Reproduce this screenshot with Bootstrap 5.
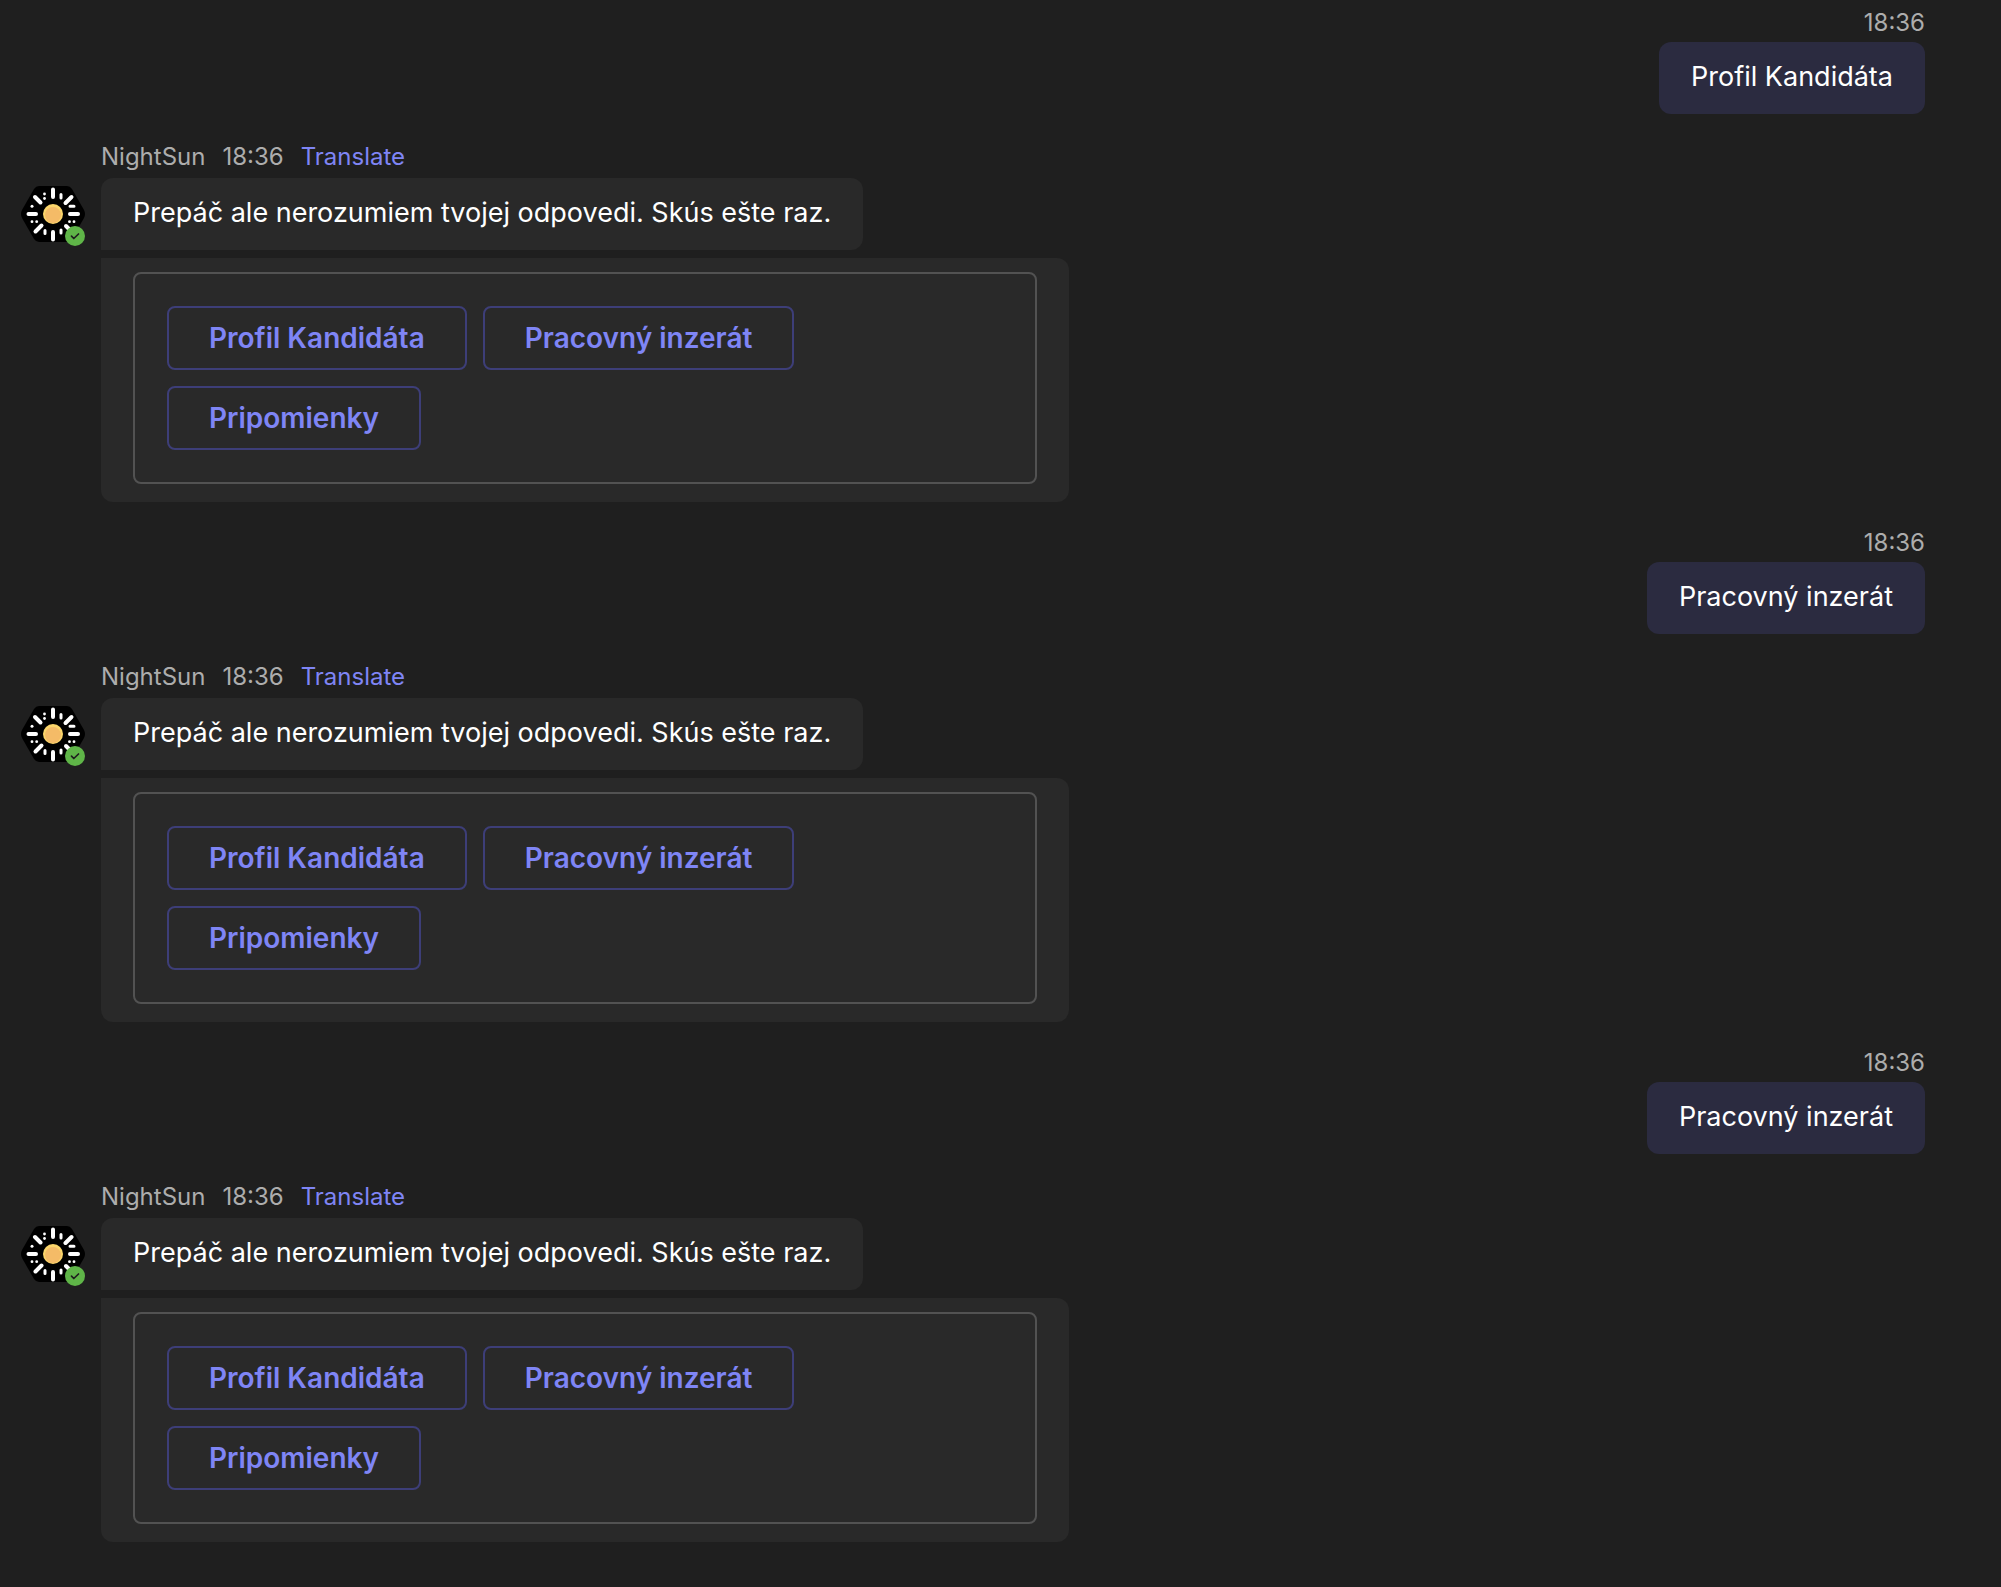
<!DOCTYPE html>
<html lang="sk">
<head>
<meta charset="utf-8">
<meta name="viewport" content="width=device-width, initial-scale=1">
<title>NightSun chat</title>
<link href="https://cdn.jsdelivr.net/npm/bootstrap@5.3.0/dist/css/bootstrap.min.css" rel="stylesheet">
<style>
  body { background: #1f1f1f; color: #fff; font-family: Inter, "Liberation Sans", sans-serif; font-size: 27px; line-height: 32px; }
  .chat-turn { padding-top: 7px; margin-bottom: 18px; }
  .sent-side { padding-right: 76px; }
  .chat-meta { font-size: 24px; line-height: 32px; color: #adadad; }
  .sent-side .chat-meta { margin-bottom: 3px; }
  .chat-meta a { color: #7f85f5; }
  .bubble { padding: 19px 32px 21px; border-radius: 12px; }
  .bubble-sent { background: #2b2b40; }
  .bubble-bot { background: #292929; border-bottom-left-radius: 0; }
  .bot-side { padding: 27px 20px 0 21px; }
  .bot-column { gap: 16px; }
  .bot-body { width: 968px; max-width: 100%; min-width: 0; }
  .bot-body .chat-meta { margin-bottom: 5px; }
  .bot-meta-gap { gap: 17px; }
  .avatar-box { width: 64px; height: 64px; margin-top: 41px; }
  .avatar-box svg { display: block; }
  .status-dot { position: absolute; right: 0; bottom: 0; }
  .choice-card { background: #292929; border-radius: 0 12px 12px 12px; margin-top: 8px; padding: 14px 32px 18px; }
  .choice-frame { border: 2px solid #525252; border-radius: 8px; padding: 32px; }
  .choice-list { gap: 16px; }
  .btn-choice { --bs-btn-color: #7f85f5; --bs-btn-border-color: #3d3e78; --bs-btn-hover-color: #9299f7; --bs-btn-hover-border-color: #5b5fc7; --bs-btn-border-width: 2px; --bs-btn-border-radius: 8px; --bs-btn-font-size: 28px; --bs-btn-font-weight: 600; --bs-btn-line-height: 32px; --bs-btn-padding-x: 40px; --bs-btn-padding-y: 14px; }
</style>
<script src="https://cdn.jsdelivr.net/npm/bootstrap@5.3.0/dist/js/bootstrap.bundle.min.js"></script>
</head>
<body>
<svg width="0" height="0" class="position-absolute" aria-hidden="true">
  <defs>
    <symbol id="sun-avatar" viewBox="0 0 64 64">
      <path d="M18 4h28q3 0 5 3l12 21q2 4 0 8L51 57q-2 3-5 3H18q-3 0-5-3L1 36q-2-4 0-8L13 7q2-3 5-3z" fill="#000"/>
      <g stroke="#fff" stroke-width="4" stroke-linecap="round">
        <path d="M32 7.500v7.500M32 50v7.500M7.500 32h7.500M49 32h8M14 15l5.500 5.500M50.500 15l-6 6M14.500 49.500l6-6M45 44l5 5"/>
      </g>
      <g stroke="#fff" stroke-width="3" stroke-linecap="round">
        <path d="M40 12.500v3.500M24 48.500v3M40 48v3M49 24.300h4"/>
      </g>
      <g fill="#fff">
        <circle cx="23.500" cy="12" r="1.400"/><circle cx="23.500" cy="16.500" r="1.400"/>
        <circle cx="11" cy="24.300" r="1.500"/>
        <circle cx="11" cy="39.700" r="1.400"/><circle cx="15.700" cy="39.700" r="1.400"/>
        <circle cx="48.500" cy="39.700" r="1.400"/><circle cx="53" cy="39.700" r="1.400"/>
      </g>
      <circle cx="32" cy="32" r="10" fill="#fbd66b"/>
      <circle cx="32" cy="33" r="8" fill="#f4bb67"/>
    </symbol>
    <symbol id="available" viewBox="0 0 20 20">
      <circle cx="10" cy="10" r="10" fill="#5fb548"/>
      <path d="M6.500 10.200l2.300 2.300 4.700-4.500" fill="none" stroke="#1f1f1f" stroke-width="1.700" stroke-linecap="round" stroke-linejoin="round"/>
    </symbol>
  </defs>
</svg>
<main>
  <section class="chat-turn">
    <div class="sent-side d-flex flex-column align-items-end">
      <time class="chat-meta">18:36</time>
      <div class="bubble bubble-sent">Profil Kandidáta</div>
    </div>
    <div class="bot-side"><div class="bot-column d-flex align-items-start">
      <div class="avatar-box position-relative flex-shrink-0">
        <svg width="64" height="64" role="img" aria-label="NightSun"><use href="#sun-avatar"/></svg>
        <svg class="status-dot" width="20" height="20" aria-hidden="true"><use href="#available"/></svg>
      </div>
      <div class="bot-body">
        <div class="chat-meta bot-meta-gap d-flex"><span>NightSun</span><time>18:36</time><a href="#" class="text-decoration-none">Translate</a></div>
        <div class="d-flex"><div class="bubble bubble-bot">Prepáč ale nerozumiem tvojej odpovedi. Skús ešte raz.</div></div>
        <div class="choice-card"><div class="choice-frame"><div class="choice-list d-flex flex-wrap">
          <button type="button" class="btn btn-choice">Profil Kandidáta</button>
          <button type="button" class="btn btn-choice">Pracovný inzerát</button>
          <button type="button" class="btn btn-choice">Pripomienky</button>
        </div></div></div>
      </div>
    </div></div>
  </section>
  <section class="chat-turn">
    <div class="sent-side d-flex flex-column align-items-end">
      <time class="chat-meta">18:36</time>
      <div class="bubble bubble-sent">Pracovný inzerát</div>
    </div>
    <div class="bot-side"><div class="bot-column d-flex align-items-start">
      <div class="avatar-box position-relative flex-shrink-0">
        <svg width="64" height="64" role="img" aria-label="NightSun"><use href="#sun-avatar"/></svg>
        <svg class="status-dot" width="20" height="20" aria-hidden="true"><use href="#available"/></svg>
      </div>
      <div class="bot-body">
        <div class="chat-meta bot-meta-gap d-flex"><span>NightSun</span><time>18:36</time><a href="#" class="text-decoration-none">Translate</a></div>
        <div class="d-flex"><div class="bubble bubble-bot">Prepáč ale nerozumiem tvojej odpovedi. Skús ešte raz.</div></div>
        <div class="choice-card"><div class="choice-frame"><div class="choice-list d-flex flex-wrap">
          <button type="button" class="btn btn-choice">Profil Kandidáta</button>
          <button type="button" class="btn btn-choice">Pracovný inzerát</button>
          <button type="button" class="btn btn-choice">Pripomienky</button>
        </div></div></div>
      </div>
    </div></div>
  </section>
  <section class="chat-turn">
    <div class="sent-side d-flex flex-column align-items-end">
      <time class="chat-meta">18:36</time>
      <div class="bubble bubble-sent">Pracovný inzerát</div>
    </div>
    <div class="bot-side"><div class="bot-column d-flex align-items-start">
      <div class="avatar-box position-relative flex-shrink-0">
        <svg width="64" height="64" role="img" aria-label="NightSun"><use href="#sun-avatar"/></svg>
        <svg class="status-dot" width="20" height="20" aria-hidden="true"><use href="#available"/></svg>
      </div>
      <div class="bot-body">
        <div class="chat-meta bot-meta-gap d-flex"><span>NightSun</span><time>18:36</time><a href="#" class="text-decoration-none">Translate</a></div>
        <div class="d-flex"><div class="bubble bubble-bot">Prepáč ale nerozumiem tvojej odpovedi. Skús ešte raz.</div></div>
        <div class="choice-card"><div class="choice-frame"><div class="choice-list d-flex flex-wrap">
          <button type="button" class="btn btn-choice">Profil Kandidáta</button>
          <button type="button" class="btn btn-choice">Pracovný inzerát</button>
          <button type="button" class="btn btn-choice">Pripomienky</button>
        </div></div></div>
      </div>
    </div></div>
  </section>
</main>
</body>
</html>
